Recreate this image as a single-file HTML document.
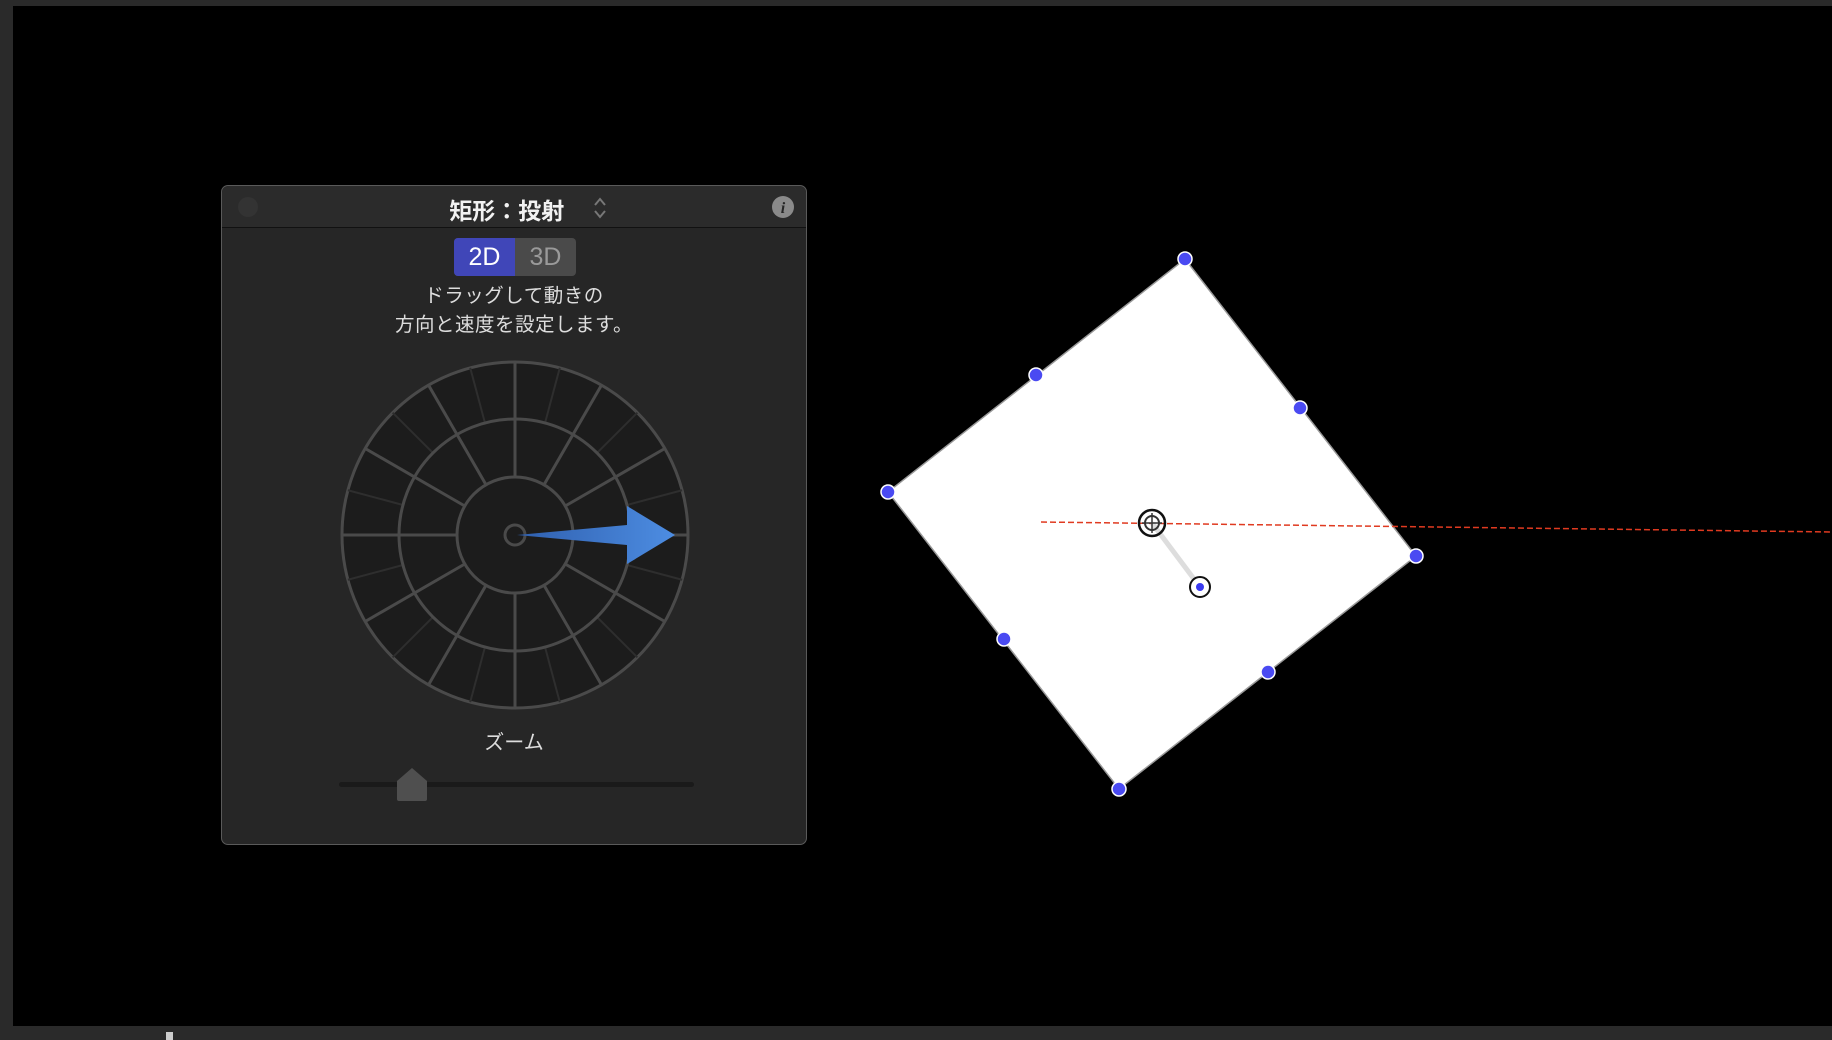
<!DOCTYPE html>
<html><head><meta charset="utf-8"><style>
html,body{margin:0;padding:0;width:1832px;height:1040px;background:#2a2a2a;overflow:hidden;font-family:"Liberation Sans","Noto Sans CJK JP",sans-serif}
#view{position:absolute;left:13px;top:6px;width:1819px;height:1020px;background:#000}
#panel{position:absolute;left:221px;top:185px;width:584px;height:658px;background:#262626;border:1px solid #5a5a5a;border-radius:7px}
#tb{position:absolute;left:0;top:0;width:100%;height:41px;border-bottom:1px solid #111;background:#2b2b2b;border-radius:7px 7px 0 0}
.t{position:absolute;color:#fff;text-align:center}
</style></head><body>
<div id="view"></div>
<div id="panel">
 <div id="tb"></div>
 <div style="position:absolute;left:16px;top:11px;width:20px;height:20px;border-radius:50%;background:#333"></div>
 <div class="t" style="left:6px;width:584px;top:6px;font-size:23px;font-weight:bold;color:#f2f2f2">矩形：投射 <span style="display:inline-block;width:20px"></span></div>
 <svg style="position:absolute;left:370px;top:9px" width="16" height="26"><path d="M3 10 L8 4 L13 10 M3 16 L8 22 L13 16" stroke="#777" stroke-width="2" fill="none"/></svg>
 <svg style="position:absolute;left:549px;top:9px" width="24" height="24"><circle cx="12" cy="12" r="11" fill="#8a8a8a"/><text x="12" y="18" text-anchor="middle" font-family="Liberation Serif" font-style="italic" font-weight="bold" font-size="16" fill="#262626">i</text></svg>
 <div style="position:absolute;left:232px;top:52px;width:122px;height:38px;border-radius:4px;overflow:hidden;background:#4a4a4a">
  <div style="position:absolute;left:0;top:0;width:61px;height:38px;background:#4046b8;color:#fff;font-size:25px;line-height:38px;text-align:center">2D</div>
  <div style="position:absolute;left:61px;top:0;width:61px;height:38px;color:#9a9a9a;font-size:25px;line-height:38px;text-align:center">3D</div>
 </div>
 <div class="t" style="left:0;width:584px;top:96px;font-size:19.5px;line-height:29px;color:#ddd;letter-spacing:0.5px">ドラッグして動きの<br>方向と速度を設定します。</div>
 <svg style="position:absolute;left:0;top:0" width="584" height="658">
  <g transform="translate(293,349)">
   <circle r="173" fill="#1c1c1c" stroke="#4a4a4a" stroke-width="3"/>
   <g stroke="#2e2e2e" stroke-width="2">
    <line x1="0" y1="-116" x2="0" y2="-173" transform="rotate(15)"/><line x1="0" y1="-116" x2="0" y2="-173" transform="rotate(45)"/><line x1="0" y1="-116" x2="0" y2="-173" transform="rotate(75)"/><line x1="0" y1="-116" x2="0" y2="-173" transform="rotate(105)"/><line x1="0" y1="-116" x2="0" y2="-173" transform="rotate(135)"/><line x1="0" y1="-116" x2="0" y2="-173" transform="rotate(165)"/><line x1="0" y1="-116" x2="0" y2="-173" transform="rotate(195)"/><line x1="0" y1="-116" x2="0" y2="-173" transform="rotate(225)"/><line x1="0" y1="-116" x2="0" y2="-173" transform="rotate(255)"/><line x1="0" y1="-116" x2="0" y2="-173" transform="rotate(285)"/><line x1="0" y1="-116" x2="0" y2="-173" transform="rotate(315)"/><line x1="0" y1="-116" x2="0" y2="-173" transform="rotate(345)"/>
   </g>
   <g stroke="#4a4a4a" stroke-width="3">
    <line x1="0" y1="-58" x2="0" y2="-173" transform="rotate(30)"/><line x1="0" y1="-58" x2="0" y2="-173" transform="rotate(60)"/><line x1="0" y1="-58" x2="0" y2="-173" transform="rotate(120)"/><line x1="0" y1="-58" x2="0" y2="-173" transform="rotate(150)"/><line x1="0" y1="-58" x2="0" y2="-173" transform="rotate(210)"/><line x1="0" y1="-58" x2="0" y2="-173" transform="rotate(240)"/><line x1="0" y1="-58" x2="0" y2="-173" transform="rotate(300)"/><line x1="0" y1="-58" x2="0" y2="-173" transform="rotate(330)"/>
    <line x1="0" y1="-58" x2="0" y2="-173"/><line x1="0" y1="58" x2="0" y2="173"/><line x1="-58" y1="0" x2="-173" y2="0"/><line x1="58" y1="0" x2="173" y2="0"/>
   </g>
   <circle r="116" fill="none" stroke="#4a4a4a" stroke-width="3"/>
   <circle r="58" fill="#1c1c1c" stroke="#4a4a4a" stroke-width="3"/>
   <circle r="10" fill="none" stroke="#4a4a4a" stroke-width="3"/>
   <defs><linearGradient id="g" x1="0" x2="1"><stop offset="0" stop-color="#2f5fae"/><stop offset="1" stop-color="#4d8de2"/></linearGradient></defs>
   <path d="M2 0 L112 -10 L112 -29 L160 0 L112 29 L112 10 Z" fill="url(#g)"/>
  </g>
 </svg>
 <div class="t" style="left:0;width:584px;top:540px;font-size:20px;color:#ddd">ズーム</div>
 <div style="position:absolute;left:117px;top:596px;width:355px;height:5px;border-radius:3px;background:#1a1a1a"></div>
 <svg style="position:absolute;left:174px;top:581px" width="32" height="35"><path d="M1 14 L16 1 L31 14 L31 32 Q31 34 29 34 L3 34 Q1 34 1 32 Z" fill="#4f4f4f"/></svg>
</div>
<svg style="position:absolute;left:0;top:0" width="1832" height="1040">
 <polygon points="1185,259 1416,556 1119,789 888,492" fill="#fff" stroke="#999" stroke-width="1.5"/>
 <line x1="1041" y1="522" x2="1832" y2="532" stroke="#e03a20" stroke-width="1.5" stroke-dasharray="6,3"/>
 <line x1="1152" y1="523" x2="1200" y2="587" stroke="#ddd" stroke-width="5"/>
 <circle cx="1152" cy="523" r="13" fill="none" stroke="#111" stroke-width="2.5"/>
 <circle cx="1152" cy="523" r="7" fill="none" stroke="#333" stroke-width="2"/>
 <line x1="1152" y1="513" x2="1152" y2="533" stroke="#333" stroke-width="1.5"/>
 <line x1="1142" y1="523" x2="1162" y2="523" stroke="#333" stroke-width="1.5"/>
 <circle cx="1200" cy="587" r="10" fill="#fff" stroke="#111" stroke-width="2"/>
 <circle cx="1200" cy="587" r="4" fill="#3a3af0"/>
 <g fill="#4a4af2" stroke="#fff" stroke-width="1.5">
  <circle cx="1185" cy="259" r="7"/><circle cx="1416" cy="556" r="7"/><circle cx="1119" cy="789" r="7"/><circle cx="888" cy="492" r="7"/>
  <circle cx="1036" cy="375" r="7"/><circle cx="1300" cy="408" r="7"/><circle cx="1268" cy="672" r="7"/><circle cx="1004" cy="639" r="7"/>
 </g>
 <rect x="166" y="1032" width="7" height="8" fill="#ccc"/>
</svg>
</body></html>
